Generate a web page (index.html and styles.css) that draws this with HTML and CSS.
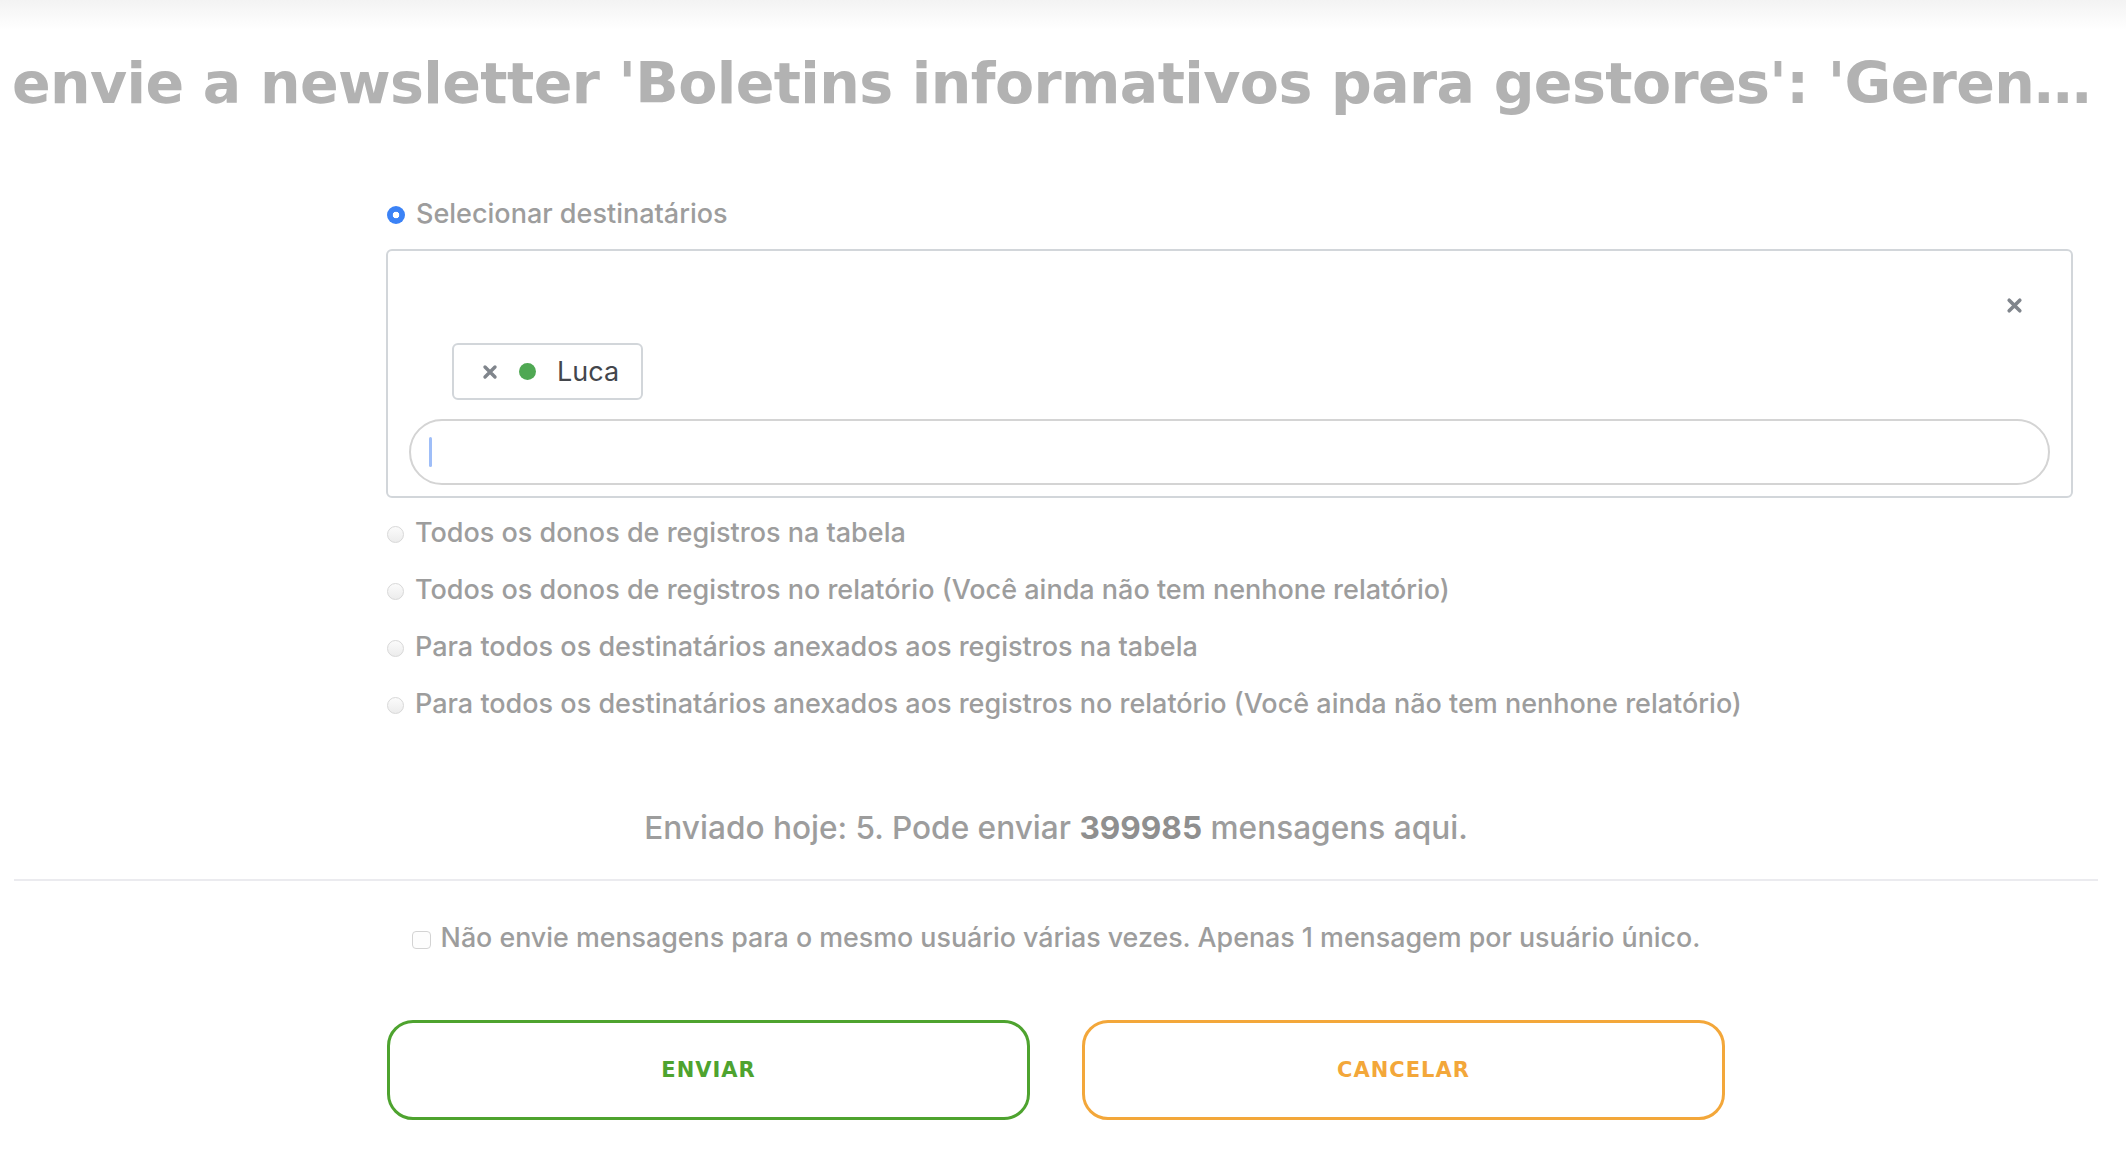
FILE: index.html
```html
<!DOCTYPE html>
<html lang="pt">
<head>
<meta charset="utf-8">
<title>Enviar newsletter</title>
<link rel="stylesheet" href="styles.css">
</head>
<body>
<div class="topbar"></div>
<h1 class="title">envie a newsletter 'Boletins informativos para gestores': 'Geren…</h1>

<div class="form">
  <div class="radio-row selected-row">
    <span class="radio radio-on"></span>
    <span class="label">Selecionar destinatários</span>
  </div>

  <div class="picker">
    <div class="picker-top">
      <svg class="x-icon x-big" viewBox="0 0 16 16"><path d="M3 3L13 13M13 3L3 13"/></svg>
    </div>
    <div class="chips">
      <span class="chip">
        <svg class="x-icon x-small" viewBox="0 0 16 16"><path d="M3 3L13 13M13 3L3 13"/></svg>
        <span class="dot"></span>
        <span class="chip-name">Luca</span>
      </span>
    </div>
    <div class="search"><span class="caret"></span></div>
  </div>

  <div class="options">
    <div class="radio-row opt"><span class="radio"></span><span class="label">Todos os donos de registros na tabela</span></div>
    <div class="radio-row opt"><span class="radio"></span><span class="label">Todos os donos de registros no relatório (Você ainda não tem nenhone relatório)</span></div>
    <div class="radio-row opt"><span class="radio"></span><span class="label">Para todos os destinatários anexados aos registros na tabela</span></div>
    <div class="radio-row opt"><span class="radio"></span><span class="label">Para todos os destinatários anexados aos registros no relatório (Você ainda não tem nenhone relatório)</span></div>
  </div>
</div>

<div class="footer">
  <p class="stats">Enviado hoje: 5. Pode enviar <b>399985</b> mensagens aqui.</p>
  <hr class="sep">
  <div class="check-row"><span class="checkbox"></span><span class="label">Não envie mensagens para o mesmo usuário várias vezes. Apenas 1 mensagem por usuário único.</span></div>
  <div class="buttons">
    <button class="btn btn-send">ENVIAR</button>
    <button class="btn btn-cancel">CANCELAR</button>
  </div>
</div>
</body>
</html>
```

FILE: styles.css
```css
html, body {
  margin: 0;
  padding: 0;
  background: #ffffff;
  width: 2126px;
  height: 1156px;
  overflow: hidden;
}

body {
  font-family: "Inter", "Noto Sans", sans-serif;
  color: #9d9d9d;
}

.topbar {
  height: 30px;
  background: linear-gradient(#f3f3f3, #ffffff);
}

.title {
  margin: 0;
  padding: 20px 10px 0 12px;
  font-family: "DejaVu Sans", sans-serif;
  font-weight: 700;
  font-size: 57px;
  line-height: 66px;
  color: #b2b2b2;
  white-space: nowrap;
  overflow: hidden;
  letter-spacing: -0.6px;
}

.form {
  margin: 78px 53px 0 386px;
}

.radio-row {
  display: flex;
  align-items: center;
  font-size: 27px;
  font-weight: 500;
  line-height: 40px;
}

.label {
  color: #9d9d9d;
}

.radio {
  flex: none;
  width: 17px;
  height: 17px;
  border-radius: 50%;
  border: 1px solid #d8d8d8;
  background: linear-gradient(#fbfbfb, #ececec);
  margin: 4px 11px 0 1px;
  box-sizing: border-box;
}

.radio-on {
  width: 18px;
  height: 18px;
  border: none;
  background: radial-gradient(circle, #ffffff 0 3px, #3b82f6 3.6px);
  margin: 2px 11px 0 1px;
}

.picker {
  margin-top: 15px;
  height: 249px;
  box-sizing: border-box;
  border: 2px solid #d2d6da;
  border-radius: 6px;
  padding: 0 21px 11px;
}

.picker-top {
  height: 92px;
  display: flex;
  justify-content: flex-end;
  align-items: flex-start;
  padding: 46px 27px 0 0;
  box-sizing: border-box;
}

.x-icon {
  display: block;
  fill: none;
  stroke: #80858c;
  stroke-width: 3.4;
  stroke-linecap: round;
}

.x-big {
  width: 17px;
  height: 17px;
}

.x-small {
  width: 16px;
  height: 16px;
}

.chips {
  display: flex;
  padding-left: 43px;
}

.chip {
  display: flex;
  align-items: center;
  height: 57px;
  box-sizing: border-box;
  border: 2px solid #d2d6da;
  border-radius: 6px;
  padding: 0 22px 0 28px;
}

.dot {
  width: 17px;
  height: 17px;
  border-radius: 50%;
  background: #4fa853;
  margin: 0 21px 0 21px;
}

.chip-name {
  font-size: 27px;
  color: #43464c;
  font-weight: 400;
}

.search {
  margin-top: 19px;
  height: 66px;
  box-sizing: border-box;
  border: 2px solid #d4d4d4;
  border-radius: 33px;
  display: flex;
  align-items: center;
  padding-left: 18px;
}

.caret {
  width: 3px;
  height: 30px;
  border-radius: 2px;
  background: #9fbef8;
}

.options {
  margin-top: 6px;
}

.opt {
  line-height: 57px;
}

.footer {
  margin: 76px 28px 0 14px;
}

.stats {
  margin: 0;
  text-align: center;
  font-size: 31.6px;
  font-weight: 500;
  line-height: 40px;
  color: #9d9d9d;
}

.stats b {
  font-weight: 700;
  color: #8f8f8f;
}

.sep {
  margin: 31px 0 0;
  border: none;
  border-top: 2px solid #ebebef;
}

.check-row {
  margin-top: 36px;
  display: flex;
  justify-content: center;
  align-items: center;
  font-size: 26.8px;
  font-weight: 500;
  line-height: 40px;
}

.checkbox {
  width: 19px;
  height: 18px;
  border: 1.5px solid #d3d3d3;
  border-radius: 4px;
  box-sizing: border-box;
  margin: 6px 10px 0 0;
  background: #fdfdfd;
}

.buttons {
  margin-top: 63px;
  display: flex;
  justify-content: center;
  gap: 52px;
}

.btn {
  width: 643px;
  height: 100px;
  background: #ffffff;
  border-radius: 26px;
  border: 3px solid;
  font-family: "DejaVu Sans", sans-serif;
  font-weight: 700;
  font-size: 21px;
  letter-spacing: 1px;
  cursor: pointer;
}

.btn-send {
  border-color: #4ea32f;
  color: #4ea32f;
}

.btn-cancel {
  border-color: #f3a73a;
  color: #f3a73a;
}
```
